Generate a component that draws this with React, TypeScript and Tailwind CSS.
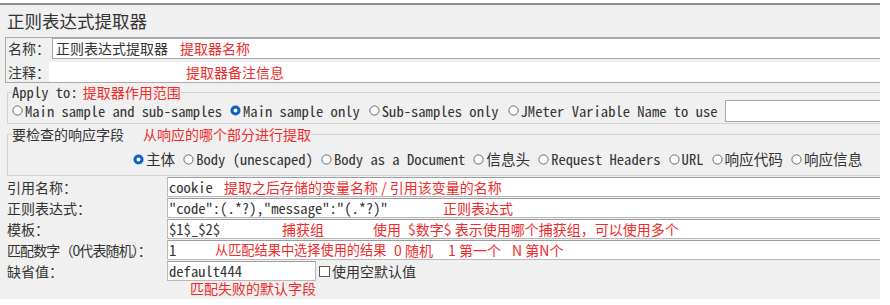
import React from "react";

const cjk = "font-['Noto_Sans_CJK_SC','Noto_Sans',sans-serif]";
const mono = "font-['Noto_Sans_Mono_CJK_SC','Liberation_Mono','Noto_Sans_CJK_SC',monospace] text-[14.6px]";

// 单选按钮
const Radio = ({ checked = false }: { checked?: boolean }) => (
  <svg width="11" height="11" viewBox="0 0 11 11" className="shrink-0">
    {checked ? (
      <>
        <circle cx="5.5" cy="5.5" r="5" fill="#0b62c4" />
        <circle cx="5.5" cy="5.5" r="2" fill="#ffffff" />
      </>
    ) : (
      <circle cx="5.5" cy="5.5" r="4.6" fill="#ffffff" stroke="#5a5a5a" strokeWidth="0.9" />
    )}
  </svg>
);

const Opt = ({ label, checked, className = "" }: { label: string; checked?: boolean; className?: string }) => (
  <div className={`flex items-center gap-[2px] whitespace-nowrap ${className}`}>
    <Radio checked={checked} />
    <span>{label}</span>
  </div>
);

const Row = ({ label, children, className = "", labelClass = "" }: { label: string; children?: React.ReactNode; className?: string; labelClass?: string }) => (
  <div className="flex h-[20px]">
    <div className={`w-[167px] shrink-0 pl-[7px] flex items-center whitespace-nowrap text-[14px] ${cjk} ${labelClass}`}>{label}</div>
    <div className={`relative h-full bg-white border border-r-0 border-[#b9b9b9] border-t-[#9c9c9c] flex items-center pl-[1px] ${className}`}>
      {children}
    </div>
  </div>
);

const Note = ({ left, children, small }: { left: number; children: React.ReactNode; small?: boolean }) => (
  <span
    className={`absolute inset-y-0 flex items-center whitespace-pre text-[#ef2b2b] ${small ? "text-[13.2px]" : "text-[14px]"} ${cjk}`}
    style={{ left }}
  >
    {children}
  </span>
);

export default function App() {
  return (
    <div className="w-[890px] h-[305px] bg-white overflow-hidden">
      <div className="mt-[3px] w-[880px] h-[296px] bg-[#f0f0f0] border-t-2 border-[#8e8e8e] flex flex-col text-[#333]">
        <div className={`h-[32px] px-[7px] flex items-center text-[17.5px] ${cjk}`}>正则表达式提取器</div>

        {/* 名称 / 注释 */}
        <div className="ml-[5px] border-t border-b border-l border-[#a9a9a9] flex flex-col">
          <div className="flex h-[21px]">
            <div className={`w-[46px] shrink-0 pl-[2px] flex items-center whitespace-nowrap text-[14px] ${cjk}`}>名称：</div>
            <div className={`relative flex-1 bg-white border border-r-0 border-[#a7a7a7] flex items-center pl-[3px] text-[14px] ${cjk}`}>
              正则表达式提取器
              <Note left={127}>提取器名称</Note>
            </div>
          </div>
          <div className="flex h-[20px] mt-[3px]">
            <div className={`w-[43px] shrink-0 pl-[2px] flex items-center whitespace-nowrap text-[14px] ${cjk}`}>注释：</div>
            <div className="relative flex-1 bg-white">
              <Note left={137}>提取器备注信息</Note>
            </div>
          </div>
        </div>

        {/* Apply to */}
        <fieldset className="mt-[1px] ml-[7px] border border-r-0 border-[#d2d2d2]">
          <legend className={`ml-[4px] flex items-center h-[16px] ${mono}`}>
            <span>Apply to:</span>
            <span className={`ml-[5px] text-[14px] text-[#ef2b2b] ${cjk}`}>提取器作用范围</span>
          </legend>
          <div className={`flex items-center h-[22px] pl-[4px] mb-[1px] ${mono}`}>
            <Opt label="Main sample and sub-samples" />
            <Opt label="Main sample only" checked className="ml-[8px]" />
            <Opt label="Sub-samples only" className="ml-[9px]" />
            <Opt label="JMeter Variable Name to use" className="ml-[9px]" />
            <div className="ml-[7px] flex-1 h-[22px] bg-white border border-r-0 border-[#a7a7a7]" />
          </div>
        </fieldset>

        {/* 要检查的响应字段 */}
        <fieldset className="mt-[2px] ml-[7px] border border-r-0 border-[#d2d2d2]">
          <legend className={`ml-[4px] flex items-center h-[16px] text-[14px] ${cjk}`}>
            <span>要检查的响应字段</span>
            <span className="ml-[19px] text-[#ef2b2b]">从响应的哪个部分进行提取</span>
          </legend>
          <div className={`flex items-center h-[18px] mt-[8px] mb-[7px] pl-[125px] ${mono}`}>
            <Opt label="主体" checked />
            <Opt label="Body (unescaped)" className="ml-[8px]" />
            <Opt label="Body as a Document" className="ml-[8px]" />
            <Opt label="信息头" className="ml-[8px]" />
            <Opt label="Request Headers" className="ml-[8px]" />
            <Opt label="URL" className="ml-[8px]" />
            <Opt label="响应代码" className="ml-[8px]" />
            <Opt label="响应信息" className="ml-[8px]" />
          </div>
        </fieldset>

        {/* 参数行 */}
        <div className="mt-[1px] flex flex-col gap-[1px]">
          <Row label="引用名称：" className="flex-1">
            <span className={mono}>cookie</span>
            <Note left={56}>提取之后存储的变量名称 / 引用该变量的名称</Note>
          </Row>
          <Row label="正则表达式：" className="flex-1">
            <span className={mono}>"code":(.*?),"message":"(.*?)"</span>
            <Note left={275}>正则表达式</Note>
          </Row>
          <Row label="模板：" className="flex-1">
            <span className={mono}>$1$_$2$</span>
            <Note left={114}>捕获组</Note>
            <Note left={205}>使用</Note>
            <Note left={240}>$数字$ 表示使用哪个捕获组，可以使用多个</Note>
          </Row>
          <Row label="匹配数字（0代表随机）：" className="flex-1" labelClass="tracking-[-0.9px]">
            <span className={mono}>1</span>
            <Note left={47} small>从匹配结果中选择使用的结果</Note>
            <Note left={226}>0 随机</Note>
            <Note left={280}>1 第一个</Note>
            <Note left={344}>N 第N个</Note>
          </Row>
          <div className="flex h-[20px]">
            <div className={`w-[167px] shrink-0 pl-[7px] flex items-center whitespace-nowrap text-[14px] ${cjk}`}>缺省值：</div>
            <div className="relative w-[149px] h-full bg-white border border-[#b9b9b9] border-t-[#9c9c9c] flex items-center pl-[1px]">
              <span className={mono}>default444</span>
              <span className={`absolute left-[22px] top-[17px] leading-[18px] whitespace-pre text-[14px] text-[#ef2b2b] ${cjk}`}>
                匹配失败的默认字段
              </span>
            </div>
            <div className={`ml-[3px] flex items-center gap-[2px] text-[14px] ${cjk}`}>
              <span className="w-[11px] h-[11px] bg-white border border-[#5a5a5a]" />
              <span>使用空默认值</span>
            </div>
          </div>
        </div>
      </div>
    </div>
  );
}
